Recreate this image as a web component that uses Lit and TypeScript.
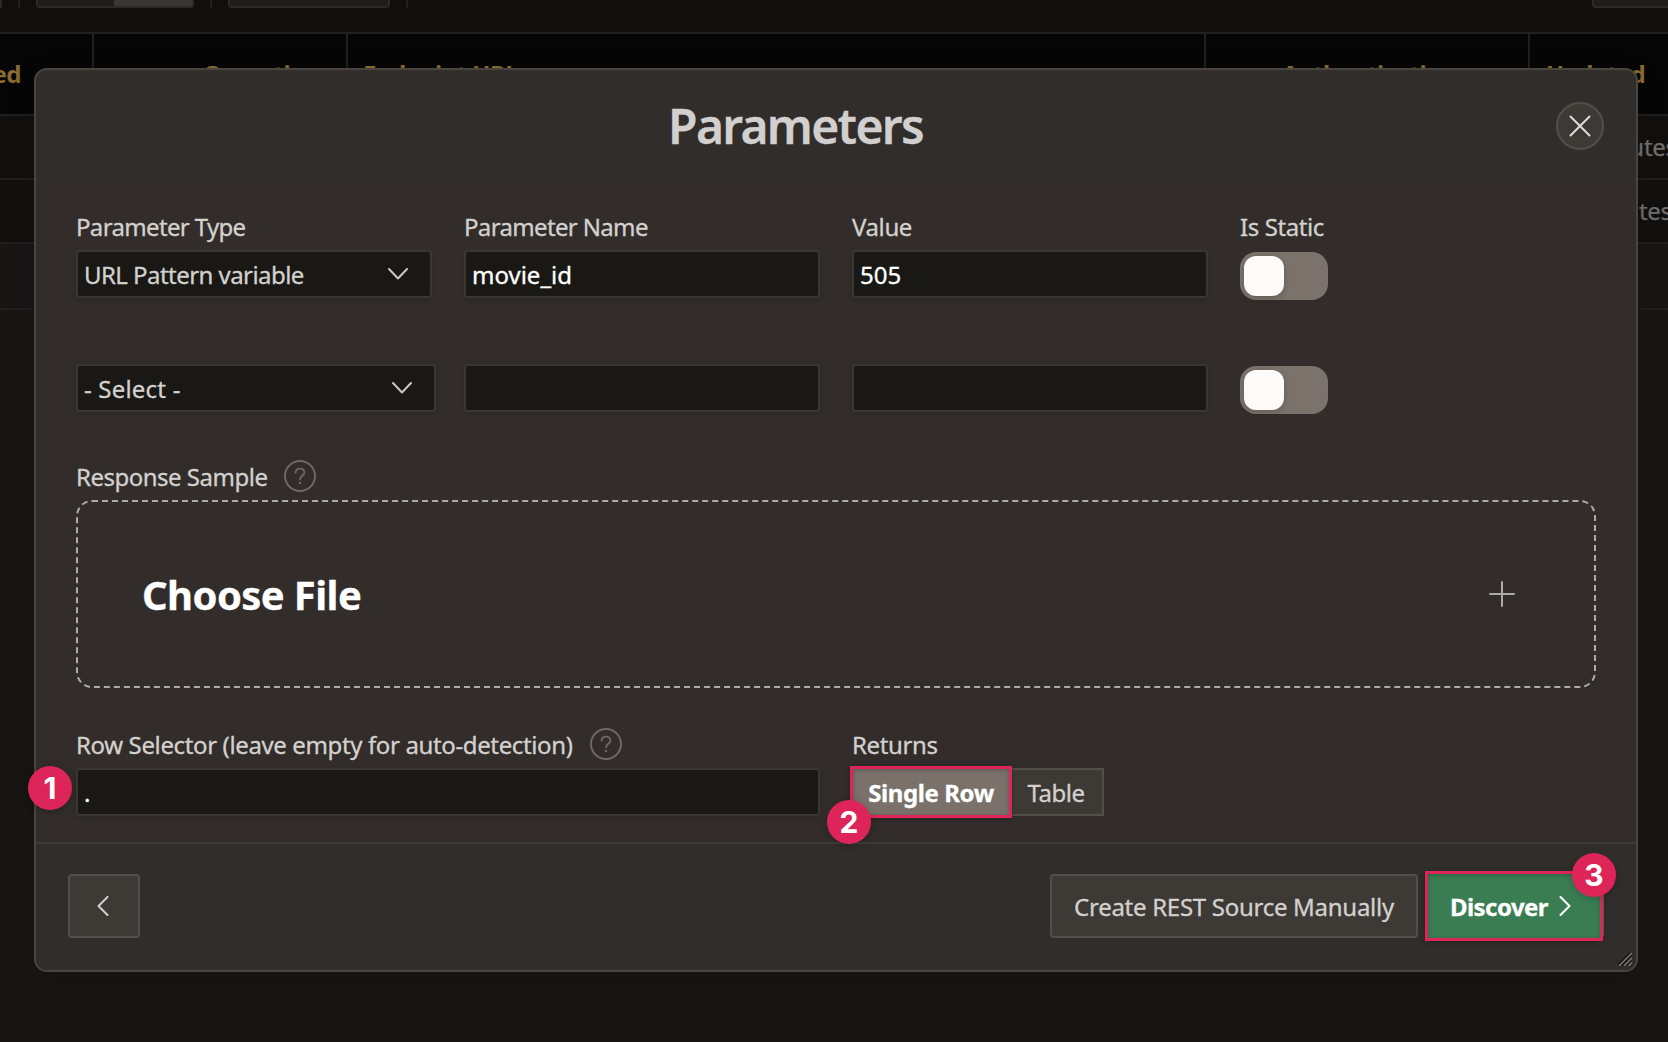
import { LitElement, html, css, svg, nothing } from "lit";

const icon = (w: number, h: number, d: string, stroke = 2, cls = "") =>
  html`<svg class="icon ${cls}" width=${w} height=${h} viewBox="0 0 ${w} ${h}" fill="none" stroke="currentColor" stroke-width=${stroke} stroke-linecap="round" stroke-linejoin="round">${svg`<path d=${d} />`}</svg>`;

class AppHelp extends LitElement {
  static styles = css`
    :host { display: block; width: 32px; height: 32px; color: #6e6965; }
    svg { display: block; }
  `;
  render() {
    return html`<svg width="32" height="32" viewBox="0 0 32 32" fill="none" stroke="currentColor">
      <circle cx="16" cy="16" r="15" stroke-width="2" />
      <path d="M11.6 12.6C11.7 10 13.6 8.6 16 8.6c2.5 0 4.4 1.5 4.4 3.8 0 3.4-4.4 3.4-4.4 7" stroke-width="1.8" stroke-linecap="round" />
      <circle cx="16" cy="23" r="1.2" fill="currentColor" stroke="none" />
    </svg>`;
  }
}
customElements.define("app-help", AppHelp);

class AppBadge extends LitElement {
  static styles = css`
    :host {
      display: block; position: absolute; z-index: 3; width: 44px; height: 44px; border-radius: 50%;
      background: #de2559; color: #fff; text-align: center; font: 700 30px/44px Inter, sans-serif; letter-spacing: 0;
      -webkit-text-stroke: 0; box-shadow: 0 2px 8px rgba(0, 0, 0, 0.2);
    }
  `;
  render() {
    return html`<slot></slot>`;
  }
}
customElements.define("app-badge", AppBadge);

class AppToggle extends LitElement {
  static styles = css`
    :host { display: block; box-sizing: border-box; width: 88px; height: 48px; padding: 4px; border-radius: 16px; background: #7a726b; }
    .knob { width: 40px; height: 40px; border-radius: 12px; background: #fcfbfa; box-shadow: 0 2px 6px rgba(0, 0, 0, 0.2); }
  `;
  render() {
    return html`<div class="knob"></div>`;
  }
}
customElements.define("app-toggle", AppToggle);

class AppBackdrop extends LitElement {
  static styles = css`
    :host { display: flex; flex-direction: column; height: 100%; background: #181614; color: #716f6c; font: 24px/32px "Noto Sans", sans-serif; white-space: nowrap; }
    .toolbar { display: flex; height: 32px; background: #100f0e; border-bottom: 2px solid #21201f; }
    .btn { box-sizing: border-box; height: 8px; background: #1e1d1c; border: 2px solid #2b2a29; border-top: 0; border-radius: 0 0 4px 4px; }
    .stub { width: 2px; border-left: 0; }
    .split { display: flex; width: 158px; margin: 0 16px; }
    .split::after { content: ""; flex: 0 0 78px; margin-left: auto; height: 6px; background: #3a3633; }
    .wide { width: 162px; margin: 0 16px; }
    .end { width: 76px; margin-left: auto; border-right: 0; border-radius: 0 0 0 4px; }
    .sep { width: 2px; height: 8px; background: #21201f; }
    .lead { margin-left: 16px; }
    .row { display: grid; grid-template-columns: 92px 254px 858px 324px 140px; align-items: center; background: #11100f; border-bottom: 2px solid #201f1e; overflow: hidden; }
    .head { height: 80px; background: #060606; color: #8a6c30; font-weight: 700; letter-spacing: -0.5px; }
    .head .cell { display: flex; align-items: center; height: 80px; box-sizing: border-box; border-left: 2px solid #201f1e; }
    .head .first { border: 0; justify-content: flex-end; padding-right: 71px; }
    .head .op { padding-left: 109px; }
    .head .url { padding-left: 15px; }
    .head .auth { padding-left: 76px; }
    .head .upd { padding-left: 16px; }
    .data { height: 62px; letter-spacing: -0.3px; }
    .blank { height: 64px; background: #181615; }
    .ago { grid-column: 5; -webkit-text-stroke: 0.25px; }
    .near { padding-left: 21px; }
    .far { padding-left: 26px; }
  `;
  render() {
    return html`
      <div class="toolbar">
        <div class="btn stub"></div><div class="sep lead"></div>
        <div class="btn split"></div><div class="sep"></div>
        <div class="btn wide"></div><div class="sep"></div>
        <div class="btn end"></div>
      </div>
      <div class="row head">
        <div class="cell first">Used</div>
        <div class="cell op">Operation</div>
        <div class="cell url">Endpoint URL</div>
        <div class="cell auth">Authentication</div>
        <div class="cell upd">Updated</div>
      </div>
      <div class="row data"><div class="ago far">10 minutes ago</div></div>
      <div class="row data"><div class="ago near">10 minutes ago</div></div>
      <div class="row blank"></div>
    `;
  }
}
customElements.define("app-backdrop", AppBackdrop);

const CHEVRON_DOWN = "M1 1L10 10.5L19 1";

class AppRoot extends LitElement {
  static styles = css`
    :host { display: block; position: relative; width: 1668px; height: 1042px; overflow: hidden; font: 24px/32px "Noto Sans", "Open Sans", sans-serif; color: #d3d1ce; }
    .icon { display: block; flex: none; }
    .dialog {
      position: absolute; left: 34px; top: 68px; box-sizing: border-box; width: 1604px; height: 904px;
      display: flex; flex-direction: column; background: #322d2a; border: 2px solid #4a453f; border-radius: 13px;
      box-shadow: 0 8px 32px rgba(0, 0, 0, 0.12); -webkit-text-stroke: 0.3px;
    }
    .header { display: flex; align-items: center; height: 112px; padding: 0 32px; background: #312d2b; border-radius: 11px 11px 0 0; }
    .title { flex: 1; margin: 0; padding: 0 33px 0 0; text-align: center; font-size: 48px; line-height: 64px; font-weight: 600; letter-spacing: -1.7px; color: #d2d0ce; }
    .close { display: flex; align-items: center; justify-content: center; box-sizing: border-box; width: 48px; height: 48px; border-radius: 50%; border: 2px solid #524e49; background: #3d3a36; color: #dedcda; }
    .body { flex: 1; padding: 29px 40px 0; }
    .grid { display: grid; grid-template-columns: repeat(4, 356px); column-gap: 32px; }
    .labels { margin-bottom: 7px; }
    .label { height: 32px; letter-spacing: -0.4px; }
    .label.tight { letter-spacing: -0.65px; }
    .with-help { display: flex; align-items: center; margin-bottom: 8px; gap: 17px; }
    .with-help .label { box-sizing: border-box; line-height: 34px; letter-spacing: -0.37px; }
    .with-help.sample .label { letter-spacing: -0.5px; }
    .box {
      display: flex; align-items: center; justify-content: space-between; box-sizing: border-box; height: 48px; padding: 2px 6px 0;
      background: #191815; border: 2px solid #3a3733; border-radius: 4px; color: #fff; box-shadow: 0 2px 4px rgba(0, 0, 0, 0.12);
    }
    .select { color: #d3d1ce; padding-right: 22px; letter-spacing: -0.55px; }
    .select .icon { margin-top: -2px; color: #c9c7c4; }
    .select.empty { width: 360px; letter-spacing: 0.2px; }
    .toggle { margin-top: 2px; }
    .second { margin-top: 64px; }
    .sample { margin-top: 46px; }
    .drop { display: flex; align-items: center; justify-content: space-between; box-sizing: border-box; height: 188px; padding: 0 79px 0 64px; border: 2px dashed #aeaaa5; border-radius: 16px; color: #fff; }
    .choose { padding-top: 2px; font-size: 40px; line-height: 56px; font-weight: 700; letter-spacing: -0.6px; }
    .drop .icon { color: #aeaaa5; }
    .bottom { margin-top: 40px; }
    .span { grid-column: span 2; position: relative; }
    .pills { display: flex; position: relative; }
    .pill { box-sizing: border-box; height: 48px; display: flex; align-items: center; justify-content: center; padding-top: 2px; border: 2px solid #524e49; background: #3d3a36; letter-spacing: -0.5px; }
    .on { width: 160px; padding-right: 2px; background: #7a716b; border-color: #7a716b; color: #fff; font-weight: 700; letter-spacing: -0.4px; border-radius: 4px 0 0 4px; }
    .off { width: 92px; border-left: 0; padding-right: 2px; }
    .mark { position: absolute; z-index: 2; box-sizing: border-box; border: 3px solid #de2559; box-shadow: 0 1px 5px rgba(0, 0, 0, 0.3), inset 0 1px 4px rgba(0, 0, 0, 0.25); }
    .m-row { left: -2px; top: -2px; width: 162px; height: 52px; }
    .m-discover { left: -3px; top: -5px; width: 178px; height: 70px; }
    .b1 { left: -48px; top: 38px; }
    .b2 { left: -25px; top: 32px; }
    .b3 { left: 144px; top: -23px; }
    .footer { position: relative; display: flex; gap: 8px; box-sizing: border-box; height: 128px; padding: 30px 32px 0; border-top: 2px solid #3e3a37; background: #312d2b; border-radius: 0 0 11px 11px; }
    .btn { box-sizing: border-box; height: 64px; display: flex; align-items: center; justify-content: center; border: 2px solid #524e49; border-radius: 4px; background: #3d3a36; }
    .btn span { padding-top: 2px; }
    .back { width: 72px; margin-right: auto; }
    .back .icon { margin-right: 2px; }
    .create { width: 368px; letter-spacing: -0.28px; }
    .discover { position: relative; width: 178px; background: #3a7d53; border-color: #3a7d53; color: #fff; font-weight: 700; letter-spacing: -0.55px; gap: 11px; padding-right: 9px; }
    .grip { position: absolute; right: 4px; bottom: 4px; display: block; }
  `;

  private chevron() {
    return icon(20, 12, CHEVRON_DOWN, 2);
  }

  private paramRow(kind: string, name: string, value: string, cls: string) {
    return html`<div class="grid ${cls}">
      <div class="box select ${name ? "" : "empty"}"><span>${kind}</span>${this.chevron()}</div>
      <div class="box">${name || nothing}</div>
      <div class="box">${value || nothing}</div>
      <app-toggle class="toggle"></app-toggle>
    </div>`;
  }

  render() {
    return html`
      <app-backdrop></app-backdrop>
      <div class="dialog">
        <div class="header">
          <h1 class="title">Parameters</h1>
          <div class="close">${icon(22, 22, "M1.5 1.5L20.5 20.5M20.5 1.5L1.5 20.5", 2)}</div>
        </div>
        <div class="body">
          <div class="grid labels">
            <div class="label tight">Parameter Type</div>
            <div class="label tight">Parameter Name</div>
            <div class="label">Value</div>
            <div class="label">Is Static</div>
          </div>
          ${this.paramRow("URL Pattern variable", "movie_id", "505", "")}
          ${this.paramRow("- Select -", "", "", "second")}
          <div class="with-help sample"><span class="label">Response Sample</span><app-help></app-help></div>
          <div class="drop">
            <span class="choose">Choose File</span>
            ${icon(26, 26, "M13 1V25M1 13H25", 2)}
          </div>
          <div class="grid bottom">
            <div class="span">
              <div class="with-help"><span class="label">Row Selector (leave empty for auto-detection)</span><app-help></app-help></div>
              <div class="box">.</div>
              <app-badge class="b1">1</app-badge>
            </div>
            <div class="span">
              <div class="with-help"><span class="label">Returns</span></div>
              <div class="pills">
                <div class="pill on">Single Row</div>
                <div class="pill off">Table</div>
                <div class="mark m-row"></div>
                <app-badge class="b2">2</app-badge>
              </div>
            </div>
          </div>
        </div>
        <div class="footer">
          <div class="btn back">${icon(12, 20, "M10.5 1L1.5 10L10.5 19", 2)}</div>
          <div class="btn create"><span>Create REST Source Manually</span></div>
          <div class="btn discover">
            <span>Discover</span>${icon(12, 20, "M1.5 1L10.5 10L1.5 19", 2)}
            <div class="mark m-discover"></div>
            <app-badge class="b3">3</app-badge>
          </div>
          <svg class="grip" width="14" height="14" viewBox="0 0 14 14" stroke-width="1.1">
            <path d="M0 12.5L12.5 0M3.7 13.5L13.5 3.7M8.7 13.5L13.5 8.7" stroke="#161412" />
            <path d="M1 14L14 1M6 14L14 6M10.5 14L14 10.5" stroke="#86827d" />
          </svg>
        </div>
      </div>
    `;
  }
}
customElements.define("app-root", AppRoot);
